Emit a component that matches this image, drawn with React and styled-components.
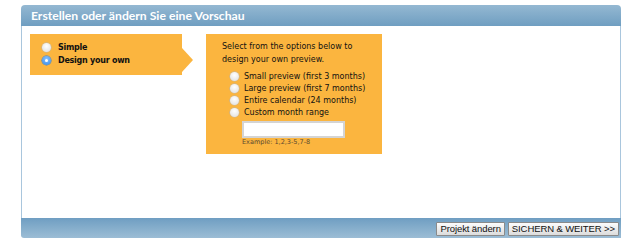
import React from 'react'
import styled, { createGlobalStyle } from 'styled-components';

const GlobalStyle = createGlobalStyle`
  html, body { margin: 0; padding: 0; background: #fff; }
`

const options = [
  { label: 'Small preview (first 3 months)' },
  { label: 'Large preview (first 7 months)' },
  { label: 'Entire calendar (24 months)' },
  { label: 'Custom month range' },
]

function Radio({ checked }) {
  return (
    <RadioDot $checked={checked}>
      {checked ? <span /> : null}
    </RadioDot>
  )
}

export default function App() {
  return (
    <Page>
      <GlobalStyle />
      <Panel>
        <Header>Erstellen oder ändern Sie eine Vorschau</Header>
        <Body>
          <ModeBox>
            <ChoiceRow $bold>
              <Radio />
              Simple
            </ChoiceRow>
            <ChoiceRow $bold>
              <Radio checked />
              Design your own
            </ChoiceRow>
          </ModeBox>
          <OptionsBox>
            <Intro>Select from the options below to design your own preview.</Intro>
            <OptionList>
              {options.map((item, index) => (
                <ChoiceRow key={index}>
                  <Radio />
                  {item.label}
                </ChoiceRow>
              ))}
            </OptionList>
            <RangeField>
              <RangeInput type="text" />
              <Hint>Example: 1,2,3-5,7-8</Hint>
            </RangeField>
          </OptionsBox>
        </Body>
        <Footer>
          <Button>Projekt ändern</Button>
          <Button>SICHERN &amp; WEITER &gt;&gt;</Button>
        </Footer>
      </Panel>
    </Page>
  )
}

const Page = styled.div`
  padding: 5px 0 0 21px;
  width: 600px;
`

const Panel = styled.div`
  display: flex;
  flex-direction: column;
  width: 600px;
`

const Header = styled.div`
  height: 21px;
  box-sizing: border-box;
  padding: 2px 0 0 10px;
  border-radius: 4px 4px 0 0;
  background: linear-gradient(#94b8d2, #6f9ec1);
  color: #fff;
  font-family: Lato, "DejaVu Sans", sans-serif;
  font-size: 12.2px;
  font-weight: bold;
  line-height: 17px;
`

const Body = styled.div`
  height: 192px;
  box-sizing: border-box;
  border-left: 1px solid #a9c6dd;
  border-right: 1px solid #a9c6dd;
  padding: 8px 0 0 8px;
  display: flex;
  align-items: flex-start;
  gap: 24px;
  font-family: "DejaVu Sans", Verdana, sans-serif;
  font-size: 8px;
  color: #111;
`

const ModeBox = styled.div`
  position: relative;
  width: 152px;
  height: 41px;
  box-sizing: border-box;
  padding: 7px 0 0 12px;
  background: #fbb53f;
  display: flex;
  flex-direction: column;
  gap: 1px;

  label {
    gap: 7px;
    letter-spacing: -0.25px;
  }

  &::after {
    content: '';
    position: absolute;
    right: -11px;
    top: 14px;
    border-style: solid;
    border-width: 12px 0 12px 11px;
    border-color: transparent transparent transparent #fbb53f;
  }
`

const OptionsBox = styled.div`
  width: 176px;
  height: 120px;
  box-sizing: border-box;
  padding: 6px 12px 0 16px;
  background: #fbb53f;
`

const Intro = styled.p`
  margin: 0 0 4px;
  line-height: 13px;
`

const OptionList = styled.div`
  display: flex;
  flex-direction: column;
  padding-left: 8px;
`

const ChoiceRow = styled.label`
  display: flex;
  align-items: center;
  gap: 5px;
  height: 12px;
  font-weight: ${p => (p.$bold ? 'bold' : 'normal')};
  white-space: nowrap;
`

const RadioDot = styled.span`
  width: 9px;
  height: 9px;
  border-radius: 50%;
  flex: none;
  display: flex;
  align-items: center;
  justify-content: center;
  background: ${p => (p.$checked
    ? 'radial-gradient(circle at 50% 35%, #8cc4ff, #2f86e6)'
    : 'radial-gradient(circle at 50% 35%, #ffffff, #dcdcdc)')};
  box-shadow: 0 0 0 0.5px ${p => (p.$checked ? '#3a7fd0' : '#b7b7b7')};

  span {
    width: 3px;
    height: 3px;
    border-radius: 50%;
    background: #fff;
  }
`

const RangeField = styled.div`
  padding: 3px 0 0 20px;
`

const RangeInput = styled.input`
  display: block;
  width: 103px;
  height: 17px;
  box-sizing: border-box;
  margin: 0;
  border: 2px solid #d4d4d4;
  background: #fff;
`

const Hint = styled.div`
  margin-top: 0;
  font-size: 6.5px;
  color: #5a4a30;
`

const Footer = styled.div`
  height: 20px;
  box-sizing: border-box;
  border-radius: 0 0 0 3px;
  background: linear-gradient(#6f9ec2, #9cbdd5);
  display: flex;
  justify-content: flex-end;
  align-items: center;
  gap: 3px;
  padding: 2px 2px 0 0;
`

const Button = styled.button`
  height: 14px;
  margin: 0;
  padding: 0 3px;
  border: 1px solid #8a8a8a;
  border-radius: 1px;
  background: linear-gradient(#fcfcfc, #dcdcdc);
  font-family: "Liberation Sans", Arial, sans-serif;
  font-size: 9.5px;
  line-height: 12px;
  letter-spacing: -0.1px;
  color: #111;
`
